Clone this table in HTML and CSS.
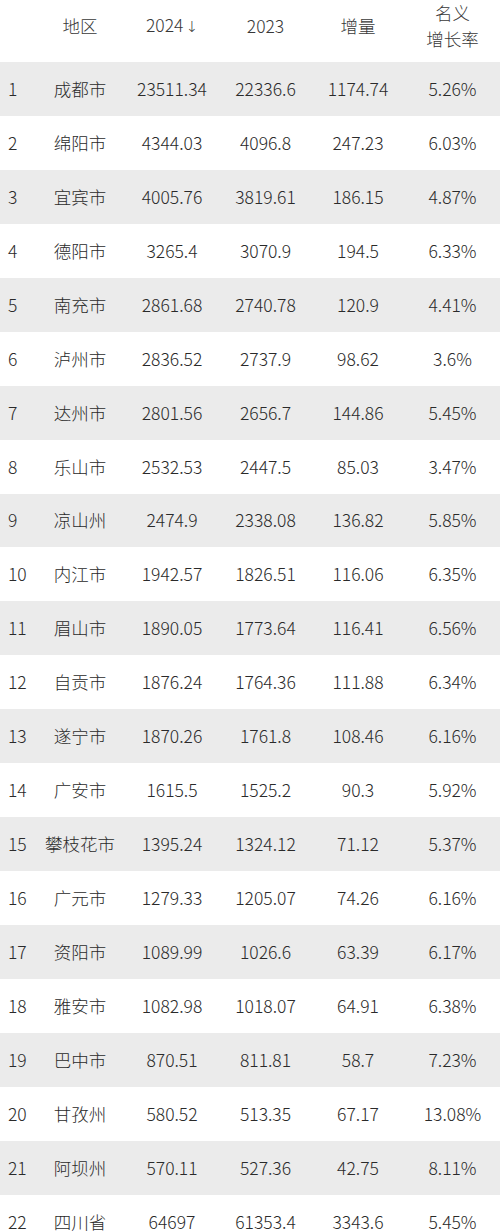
FILE: index.html
```html
<!DOCTYPE html>
<html lang="zh">
<head>
<meta charset="utf-8">
<link rel="stylesheet" href="styles.css">
</head>
<body>
<div class="table">
  <div class="row head">
    <div class="c idx"></div>
    <div class="c">地区</div>
    <div class="c">2024<span class="arrow">↓</span></div>
    <div class="c">2023</div>
    <div class="c">增量</div>
    <div class="c two">名义<br>增长率</div>
  </div>
  <div class="row alt"><div class="c idx">1</div><div class="c">成都市</div><div class="c">23511.34</div><div class="c">22336.6</div><div class="c">1174.74</div><div class="c">5.26%</div></div>
  <div class="row"><div class="c idx">2</div><div class="c">绵阳市</div><div class="c">4344.03</div><div class="c">4096.8</div><div class="c">247.23</div><div class="c">6.03%</div></div>
  <div class="row alt"><div class="c idx">3</div><div class="c">宜宾市</div><div class="c">4005.76</div><div class="c">3819.61</div><div class="c">186.15</div><div class="c">4.87%</div></div>
  <div class="row"><div class="c idx">4</div><div class="c">德阳市</div><div class="c">3265.4</div><div class="c">3070.9</div><div class="c">194.5</div><div class="c">6.33%</div></div>
  <div class="row alt"><div class="c idx">5</div><div class="c">南充市</div><div class="c">2861.68</div><div class="c">2740.78</div><div class="c">120.9</div><div class="c">4.41%</div></div>
  <div class="row"><div class="c idx">6</div><div class="c">泸州市</div><div class="c">2836.52</div><div class="c">2737.9</div><div class="c">98.62</div><div class="c">3.6%</div></div>
  <div class="row alt"><div class="c idx">7</div><div class="c">达州市</div><div class="c">2801.56</div><div class="c">2656.7</div><div class="c">144.86</div><div class="c">5.45%</div></div>
  <div class="row"><div class="c idx">8</div><div class="c">乐山市</div><div class="c">2532.53</div><div class="c">2447.5</div><div class="c">85.03</div><div class="c">3.47%</div></div>
  <div class="row alt"><div class="c idx">9</div><div class="c">凉山州</div><div class="c">2474.9</div><div class="c">2338.08</div><div class="c">136.82</div><div class="c">5.85%</div></div>
  <div class="row"><div class="c idx">10</div><div class="c">内江市</div><div class="c">1942.57</div><div class="c">1826.51</div><div class="c">116.06</div><div class="c">6.35%</div></div>
  <div class="row alt"><div class="c idx">11</div><div class="c">眉山市</div><div class="c">1890.05</div><div class="c">1773.64</div><div class="c">116.41</div><div class="c">6.56%</div></div>
  <div class="row"><div class="c idx">12</div><div class="c">自贡市</div><div class="c">1876.24</div><div class="c">1764.36</div><div class="c">111.88</div><div class="c">6.34%</div></div>
  <div class="row alt"><div class="c idx">13</div><div class="c">遂宁市</div><div class="c">1870.26</div><div class="c">1761.8</div><div class="c">108.46</div><div class="c">6.16%</div></div>
  <div class="row"><div class="c idx">14</div><div class="c">广安市</div><div class="c">1615.5</div><div class="c">1525.2</div><div class="c">90.3</div><div class="c">5.92%</div></div>
  <div class="row alt"><div class="c idx">15</div><div class="c">攀枝花市</div><div class="c">1395.24</div><div class="c">1324.12</div><div class="c">71.12</div><div class="c">5.37%</div></div>
  <div class="row"><div class="c idx">16</div><div class="c">广元市</div><div class="c">1279.33</div><div class="c">1205.07</div><div class="c">74.26</div><div class="c">6.16%</div></div>
  <div class="row alt"><div class="c idx">17</div><div class="c">资阳市</div><div class="c">1089.99</div><div class="c">1026.6</div><div class="c">63.39</div><div class="c">6.17%</div></div>
  <div class="row"><div class="c idx">18</div><div class="c">雅安市</div><div class="c">1082.98</div><div class="c">1018.07</div><div class="c">64.91</div><div class="c">6.38%</div></div>
  <div class="row alt"><div class="c idx">19</div><div class="c">巴中市</div><div class="c">870.51</div><div class="c">811.81</div><div class="c">58.7</div><div class="c">7.23%</div></div>
  <div class="row"><div class="c idx">20</div><div class="c">甘孜州</div><div class="c">580.52</div><div class="c">513.35</div><div class="c">67.17</div><div class="c">13.08%</div></div>
  <div class="row alt"><div class="c idx">21</div><div class="c">阿坝州</div><div class="c">570.11</div><div class="c">527.36</div><div class="c">42.75</div><div class="c">8.11%</div></div>
  <div class="row"><div class="c idx">22</div><div class="c">四川省</div><div class="c">64697</div><div class="c">61353.4</div><div class="c">3343.6</div><div class="c">5.45%</div></div>
</div>
</body>
</html>
```

FILE: styles.css
```css
html, body {
  margin: 0;
  padding: 0;
  background: #ffffff;
}
body {
  font-family: "Noto Sans CJK SC", "Noto Sans", sans-serif;
  font-weight: 300;
  color: #2a2a2a;
  font-size: 17.5px;
}
.table {
  width: 500px;
}
.row {
  display: grid;
  grid-template-columns: 36px 88px 96px 91px 94px 95px;
  height: 53.95px;
  align-items: center;
}
.row.alt {
  background: #ebebeb;
}
.row.head {
  height: 62px;
  padding-bottom: 22px;
  box-sizing: border-box;
  color: #383838;
}
.c {
  text-align: center;
  line-height: 24px;
  white-space: nowrap;
}
.c.idx {
  text-align: left;
  padding-left: 8px;
}
.c.two {
  line-height: 25.5px;
}
.arrow {
  font-family: "DejaVu Sans", sans-serif;
  font-weight: 300;
  font-size: 15px;
  margin-left: 2px;
}
```
